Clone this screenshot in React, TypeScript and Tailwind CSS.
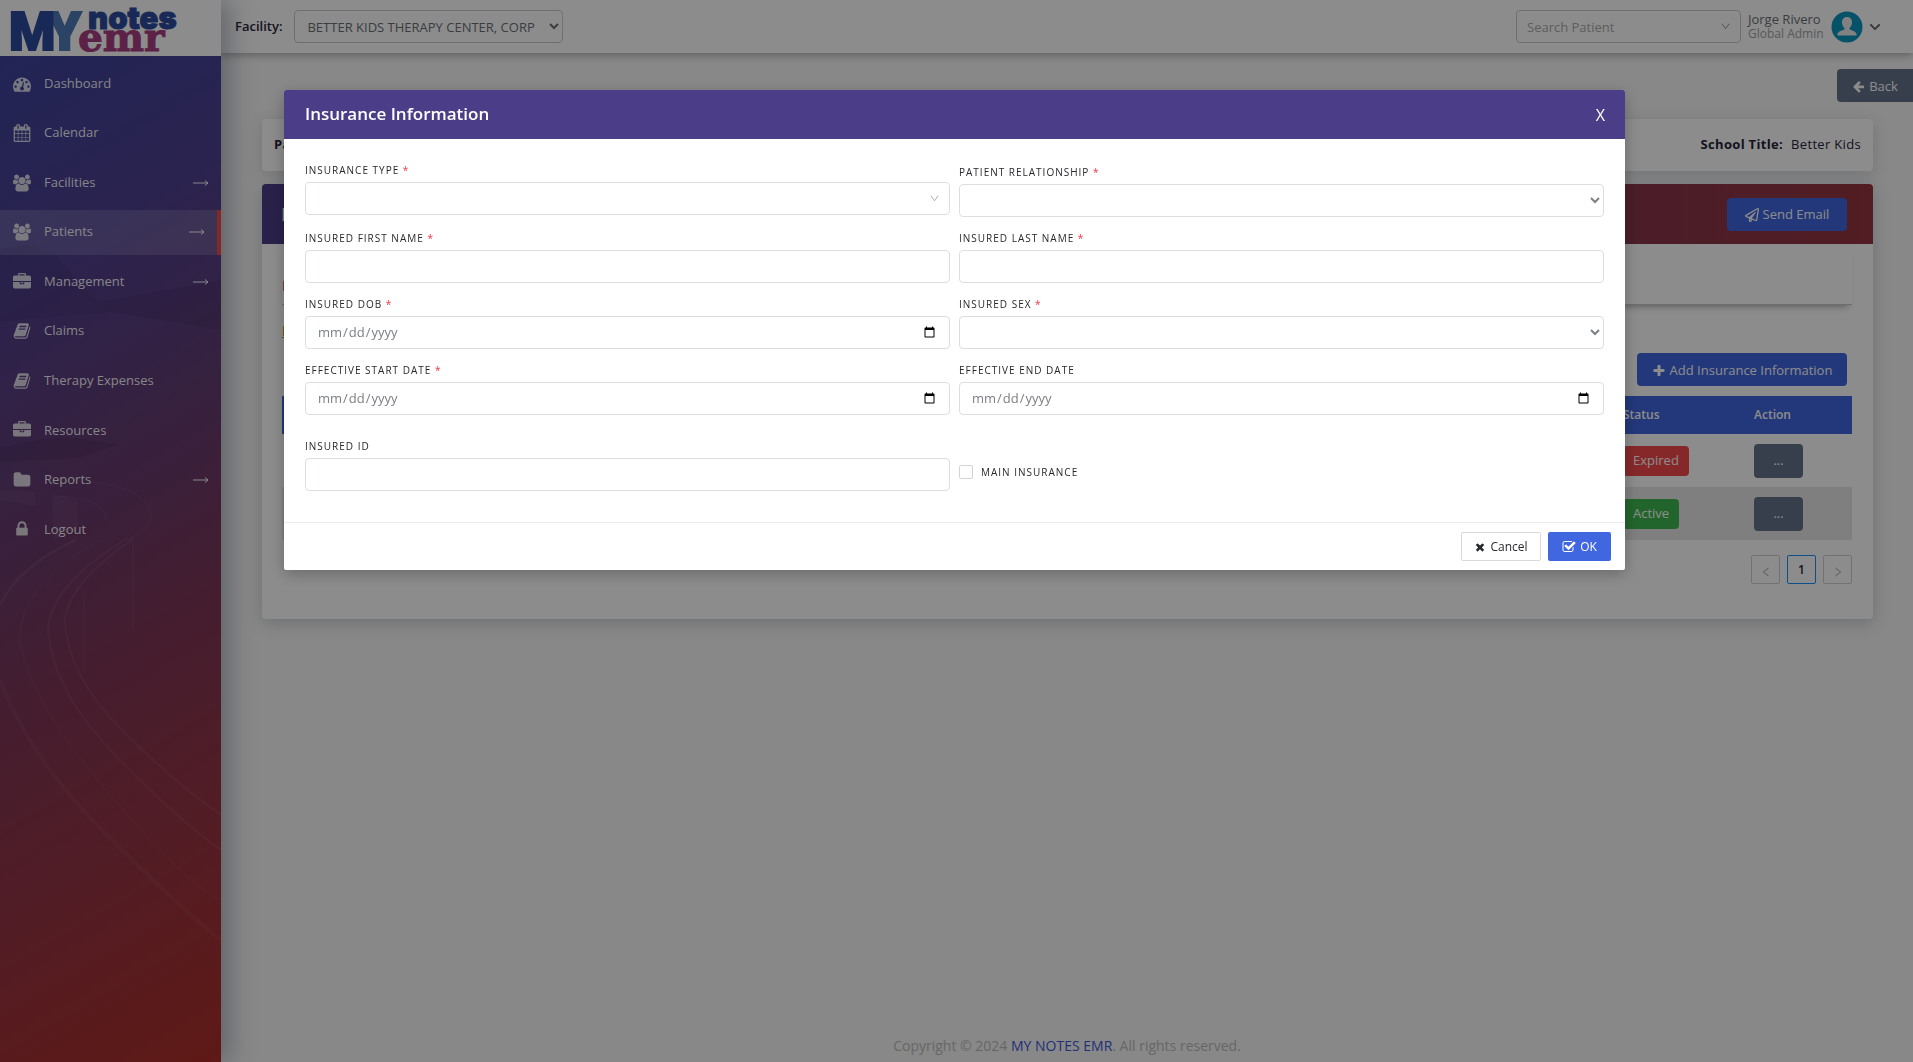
import { ReactNode } from 'react';
import { AiOutlineDown, AiOutlineLeft, AiOutlineRight } from 'react-icons/ai';
import { FaRegPaperPlane, FaChevronDown } from 'react-icons/fa';

const paths = {
  dashboard:
    'M384 1152q0-53-37.5-90.5t-90.5-37.5-90.5 37.5-37.5 90.5 37.5 90.5 90.5 37.5 90.5-37.5 37.5-90.5zm192-448q0-53-37.5-90.5t-90.5-37.5-90.5 37.5-37.5 90.5 37.5 90.5 90.5 37.5 90.5-37.5 37.5-90.5zm428 481l101-382q6-26-7.5-48.5t-38.5-29.5-48 6.5-30 39.5l-101 382q-60 5-107 43.5t-63 98.5q-20 77 20 146t117 89 146-20 89-117q16-60-6-117t-72-91zm660-33q0-53-37.5-90.5t-90.5-37.5-90.5 37.5-37.5 90.5 37.5 90.5 90.5 37.5 90.5-37.5 37.5-90.5zm-640-640q0-53-37.5-90.5t-90.5-37.5-90.5 37.5-37.5 90.5 37.5 90.5 90.5 37.5 90.5-37.5 37.5-90.5zm448 192q0-53-37.5-90.5t-90.5-37.5-90.5 37.5-37.5 90.5 37.5 90.5 90.5 37.5 90.5-37.5 37.5-90.5zm320 448q0 261-141 483-19 29-54 29h-1402q-35 0-54-29-141-221-141-483 0-182 71-348t191-286 286-191 348-71 348 71 286 191 191 286 71 348z',
  calendar:
    'M192 1664h288v-288h-288v288zm352 0h320v-288h-320v288zm-352-352h288v-320h-288v320zm352 0h320v-320h-320v320zm-352-384h288v-288h-288v288zm736 736h320v-288h-320v288zm-384-736h320v-288h-320v288zm768 736h288v-288h-288v288zm-384-352h320v-320h-320v320zm-352-864v-288q0-13-9.5-22.5t-22.5-9.5h-64q-13 0-22.5 9.5t-9.5 22.5v288q0 13 9.5 22.5t22.5 9.5h64q13 0 22.5-9.5t9.5-22.5zm736 864h288v-320h-288v320zm-384-384h320v-288h-320v288zm384 0h288v-288h-288v288zm32-480v-288q0-13-9.5-22.5t-22.5-9.5h-64q-13 0-22.5 9.5t-9.5 22.5v288q0 13 9.5 22.5t22.5 9.5h64q13 0 22.5-9.5t9.5-22.5zm384-64v1280q0 52-38 90t-90 38h-1408q-52 0-90-38t-38-90v-1280q0-52 38-90t90-38h128v-96q0-66 47-113t113-47h64q66 0 113 47t47 113v96h384v-96q0-66 47-113t113-47h64q66 0 113 47t47 113v96h128q52 0 90 38t38 90z',
  users:
    'M529 896q-162 5-265 128h-134q-82 0-138-40.5t-56-118.5q0-353 124-353 6 0 43.5 21t97.5 42.5 119 21.5q67 0 133-23-5 37-5 66 0 139 81 256zm1071 637q0 120-73 189.5t-194 69.5h-874q-121 0-194-69.5t-73-189.5q0-53 3.5-103.5t14-109 26.5-108.5 43-97.5 62-81 85.5-53.5 111.5-20q10 0 43 21.5t73 48 107 48 135 21.5 135-21.5 107-48 73-48 43-21.5q61 0 111.5 20t85.5 53.5 62 81 43 97.5 26.5 108.5 14 109 3.5 103.5zm-1024-1277q0 106-75 181t-181 75-181-75-75-181 75-181 181-75 181 75 75 181zm704 384q0 159-112.5 271.5t-271.5 112.5-271.5-112.5-112.5-271.5 112.5-271.5 271.5-112.5 271.5 112.5 112.5 271.5zm576 225q0 78-56 118.5t-138 40.5h-134q-103-123-265-128 81-117 81-256 0-29-5-66 66 23 133 23 59 0 119-21.5t97.5-42.5 43.5-21q124 0 124 353zm-128-609q0 106-75 181t-181 75-181-75-75-181 75-181 181-75 181 75 75 181z',
  briefcase:
    'M640 256h512v-128h-512v128zm1152 640v480q0 66-47 113t-113 47h-1472q-66 0-113-47t-47-113v-480h672v160q0 26 19 45t45 19h320q26 0 45-19t19-45v-160h672zm-768 0v128h-256v-128h256zm768-480v384h-1792v-384q0-66 47-113t113-47h352v-160q0-40 28-68t68-28h576q40 0 68 28t28 68v160h352q66 0 113 47t47 113z',
  book:
    'M1703 478q40 57 18 129l-275 906q-19 64-76.5 107.5t-122.5 43.5h-923q-77 0-148.5-53.5t-99.5-131.5q-24-67-2-127 0-4 3-27t4-37q1-8-3-21.5t-3-19.5q2-11 8-21t16.5-23.5 16.5-23.5q23-38 45-91.5t30-91.5q3-10 .5-30t-.5-28q3-11 17-28t17-23q21-36 42-92t25-90q1-9-2.5-32t.5-28q4-13 22-30.5t22-22.5q19-26 42.5-84.5t27.5-96.5q1-8-3-25.5t-2-26.5q2-8 9-18t18-23 17-21q8-12 16.5-30.5t15-35 16-36 19.5-32 26.5-23.5 36-11.5 47.5 5.5l-1 3q38-9 51-9h761q74 0 114 56t18 130l-274 906q-36 119-71.5 153.5t-128.5 34.5h-869q-27 0-38 15-11 16-1 43 24 70 144 70h923q29 0 56-15.5t35-41.5l300-987q7-22 5-57 38 15 59 43zm-1064 2q-4 13 2 22.5t20 9.5h608q13 0 25.5-9.5t16.5-22.5l21-64q4-13-2-22.5t-20-9.5h-608q-13 0-25.5 9.5t-16.5 22.5zm-83 256q-4 13 2 22.5t20 9.5h608q13 0 25.5-9.5t16.5-22.5l21-64q4-13-2-22.5t-20-9.5h-608q-13 0-25.5 9.5t-16.5 22.5z',
  folder:
    'M1728 608v704q0 92-66 158t-158 66h-1216q-92 0-158-66t-66-158v-960q0-92 66-158t158-66h320q92 0 158 66t66 158v32h672q92 0 158 66t66 158z',
  lock:
    'M640 768h512v-192q0-106-75-181t-181-75-181 75-75 181v192zm832 96v576q0 40-28 68t-68 28h-960q-40 0-68-28t-28-68v-576q0-40 28-68t68-28h32v-192q0-184 132-316t316-132 316 132 132 316v192h32q40 0 68 28t28 68z',
  arrowLeft:
    'M1664 896v128q0 53-32.5 90.5t-84.5 37.5h-704l293 294q38 36 38 90t-38 90l-75 76q-37 37-90 37-52 0-91-37l-651-652q-37-37-37-90 0-52 37-91l651-650q38-38 91-38 52 0 90 38l75 74q38 38 38 91t-38 91l-293 293h704q52 0 84.5 37.5t32.5 90.5z',
  plus:
    'M1600 736v192q0 40-28 68t-68 28h-416v416q0 40-28 68t-68 28h-192q-40 0-68-28t-28-68v-416h-416q-40 0-68-28t-28-68v-192q0-40 28-68t68-28h416v-416q0-40 28-68t68-28h192q40 0 68 28t28 68v416h416q40 0 68 28t28 68z',
  times:
    'M1490 1322q0 40-28 68l-136 136q-28 28-68 28t-68-28l-294-294-294 294q-28 28-68 28t-68-28l-136-136q-28-28-28-68t28-68l294-294-294-294q-28-28-28-68t28-68l136-136q28-28 68-28t68 28l294 294 294-294q28-28 68-28t68 28l136 136q28 28 28 68t-28 68l-294 294 294 294q28 28 28 68z',
  checkSquare:
    'M1472 930v318q0 119-84.5 203.5t-203.5 84.5h-832q-119 0-203.5-84.5t-84.5-203.5v-832q0-119 84.5-203.5t203.5-84.5h832q63 0 117 25 15 7 18 23 3 17-9 29l-49 49q-10 10-23 10-3 0-9-2-23-6-45-6h-832q-66 0-113 47t-47 113v832q0 66 47 113t113 47h832q66 0 113-47t47-113v-254q0-13 9-22l64-64q10-10 23-10 6 0 12 3 20 8 20 29zm231-489l-814 814q-24 24-57 24t-57-24l-430-430q-24-24-24-57t24-57l110-110q24-24 57-24t57 24l263 263 647-647q24-24 57-24t57 24l110 110q24 24 24 57t-24 57z',
};

type IconName = keyof typeof paths;

function Icon({ name, className }: { name: IconName; className?: string }) {
  const viewBox = name === 'users' ? '-64 0 1920 1792' : '0 0 1792 1792';
  return (
    <svg viewBox={viewBox} fill="currentColor" aria-hidden="true" className={className}>
      <path d={paths[name]} />
    </svg>
  );
}

const navItems: { label: string; icon: IconName; sub?: boolean; active?: boolean }[] = [
  { label: 'Dashboard', icon: 'dashboard' },
  { label: 'Calendar', icon: 'calendar' },
  { label: 'Facilities', icon: 'users', sub: true },
  { label: 'Patients', icon: 'users', sub: true, active: true },
  { label: 'Management', icon: 'briefcase', sub: true },
  { label: 'Claims', icon: 'book' },
  { label: 'Therapy Expenses', icon: 'book' },
  { label: 'Resources', icon: 'briefcase' },
  { label: 'Reports', icon: 'folder', sub: true },
  { label: 'Logout', icon: 'lock' },
];

function Logo() {
  return (
    <svg width="221" height="56" viewBox="0 0 221 56" className="overflow-visible" role="img" aria-label="My Notes EMR">
      <g fontFamily="Roboto, sans-serif" fontWeight="900" fontSize="53" strokeWidth="2">
        <text x="48" y="50" fill="#4f7cba" stroke="#4f7cba">Y</text>
        <text x="9" y="50" fill="#2e4c9e" stroke="#2e4c9e">M</text>
      </g>
      <text x="88" y="29" fontSize="31" fontWeight="900" fontFamily="Inter, sans-serif" fill="#2e4c9e" stroke="#2e4c9e">notes</text>
      <text x="78" y="51" fontSize="39" fontWeight="700" fontFamily="DejaVu Serif, serif" fill="#a83c80" stroke="#a83c80" strokeWidth="1">emr</text>
    </svg>
  );
}

function SidebarArt() {
  return (
    <svg
      className="absolute inset-0 w-full h-full"
      viewBox="0 0 221 1062"
      preserveAspectRatio="none"
      fill="none"
      stroke="#ffffff"
      strokeOpacity="0.06"
      aria-hidden="true"
    >
      <path d="M0 250Q40 235 62 262T98 302L221 280V330L110 312L0 322Z" fill="#000000" fillOpacity="0.06" stroke="none" />
      <path d="M0 448L60 436L118 444L80 458L0 462Z" fill="#000000" fillOpacity="0.08" stroke="none" />
      <path d="M76 540Q20 565 0 605" strokeWidth="3" />
      <path d="M100 540Q18 585 20 640Q28 700 110 795T221 900" />
      <path d="M128 538Q50 585 48 630Q52 690 115 755T221 850" strokeWidth="2" />
      <path d="M134 538Q66 585 65 622Q68 675 120 728T221 815" strokeWidth="2" />
      <path d="M0 680Q28 755 100 828T221 940" strokeWidth="4" strokeOpacity="0.04" />
      <path d="M84 590V672M133 540V628" />
      <path d="M90 482Q140 486 152 512Q152 528 128 540M60 496Q108 500 106 520" />
      <path d="M0 490L35 492V506L0 500ZM53 494L78 500V528L53 540Z" fill="#ffffff" fillOpacity="0.04" stroke="none" />
    </svg>
  );
}

function Sidebar() {
  return (
    <aside className="relative z-10 w-[221px] shrink-0 flex flex-col shadow-[8px_0_24px_rgba(40,55,80,0.35)] bg-[linear-gradient(150deg,#38459f_0%,#4f4090_24%,#663b6f_45%,#7d3657_60%,#953444_78%,#ad2f28_100%)]">
      <SidebarArt />
      <div className="relative h-14 bg-white">
        <Logo />
      </div>
      <nav className="relative mt-[5px] h-[491px] flex flex-col justify-between">
        {navItems.map((item) => (
          <a
            key={item.label}
            href="#"
            className={
              item.active
                ? 'h-[45px] flex items-center px-3 text-[13px] text-white/95 bg-white/15 border-r-4 border-[#f04848]'
                : 'h-[45px] flex items-center px-3 text-[13px] text-white/95'
            }
          >
            <span className="w-5 flex justify-center text-white/80">
              <Icon name={item.icon} className="w-[18px] h-[18px]" />
            </span>
            <span className="ml-3 flex-1">{item.label}</span>
            {item.sub && (
              <svg width="16" height="8" viewBox="0 0 16 8" fill="none" stroke="currentColor" aria-hidden="true">
                <path d="M0 4H15M12 1.500L15 4L12 6.500" />
              </svg>
            )}
          </a>
        ))}
      </nav>
    </aside>
  );
}

function Header() {
  return (
    <header className="h-[53px] shrink-0 bg-white flex items-center pl-[14px] pr-8 shadow-[0_2px_8px_rgba(0,0,0,0.3)]">
      <label htmlFor="facility" className="text-[13px] font-semibold text-[#27243a]">
        Facility:
      </label>
      <select id="facility" className="ml-3 w-[269px] h-[33px] px-2 rounded border border-[#c8cbd0] bg-white text-[13px] text-[#6b6f76]">
        <option>BETTER KIDS THERAPY CENTER, CORP</option>
      </select>
      <div className="ml-auto relative w-[225px]">
        <input
          type="text"
          aria-label="Search Patient"
          placeholder="Search Patient"
          className="w-full h-[33px] px-[10px] rounded border border-[#c8cbd0] bg-white text-[13px] placeholder:text-[#acacac]"
        />
        <AiOutlineDown className="absolute right-[10px] top-[11px] w-[11px] h-[11px] text-[#a0a0a0]" />
      </div>
      <div className="ml-[7px] w-[74px] whitespace-nowrap">
        <p className="text-[13px] leading-[15px] text-[#6b6f76]">Jorge Rivero</p>
        <p className="text-xs leading-[14px] text-[#a3a3a3]">Global Admin</p>
      </div>
      <svg className="ml-[9px]" width="32" height="32" viewBox="0 0 32 32" aria-hidden="true">
        <circle cx="16" cy="16" r="15.500" fill="#0b95c0" />
        <path d="M16 6c-3.500 0-5.300 2.500-5 6 .2 2.200 1.200 3.800 2.400 5v1.500c-2.400 1-6.500 1.700-7 4.900 0 .9.500 1.200 1.200 1.200h16.800c.7 0 1.200-.3 1.200-1.200-.5-3.200-4.600-3.900-7-4.900V17c1.200-1.200 2.200-2.800 2.400-5 .3-3.500-1.500-6-5-6z" fill="#ececec" />
      </svg>
      <FaChevronDown className="ml-[6px] w-3 h-3 text-[#666a70]" />
    </header>
  );
}

const rows = [
  { status: 'Expired', badge: 'bg-[#f44a4e]' },
  { status: 'Active', badge: 'bg-[#3fb950]' },
];

function PatientPage() {
  return (
    <main className="flex-1 flex flex-col pt-4">
      <button className="self-end h-[33px] w-[76px] pt-0.5 flex items-center justify-center gap-1 rounded-l bg-[#64748b] text-[13px] text-white">
        <Icon name="arrowLeft" className="w-[13px] h-[13px]" />
        Back
      </button>
      <div className="pl-[41px] pr-10 mt-[17px]">
        <section className="h-[52px] px-3 flex items-center justify-between bg-white rounded shadow-[0_4px_16px_rgba(60,75,100,0.2)] text-[13px] tracking-wide text-[#27243a]">
          <span className="font-bold">Patient:</span>
          <span>
            <span className="font-bold mr-2">School Title:</span>Better Kids
          </span>
        </section>

        <section className="mt-[13px] rounded bg-white shadow-[0_4px_16px_rgba(60,75,100,0.25)]">
          <div className="h-[60px] pl-[19px] pr-[26px] flex items-center justify-between rounded-t bg-[linear-gradient(90deg,#4b3d87_0%,#6d3a66_50%,#953540_100%)]">
            <h1 className="text-lg text-white">Insurance</h1>
            <button className="h-[33px] w-[120px] pt-0.5 flex items-center justify-center gap-1 rounded bg-[#4066e0] text-[13px] text-white">
              <FaRegPaperPlane className="w-[14px] h-[14px]" />
              Send Email
            </button>
          </div>
          <div className="pl-5 pr-[21px] pb-[35px]">
            <div className="h-[61px] pt-8 text-sm font-semibold text-[#a03070] border-b border-[#c8c8c8] shadow-[0_6px_6px_-4px_rgba(0,0,0,0.3)]">
              Insurance
            </div>
            <a href="#" className="block mt-4 text-sm underline font-semibold text-[#d08020]">Insurance</a>
            <div className="mt-3 pr-[5px] flex justify-end">
              <button className="h-[33px] w-[210px] pt-0.5 flex items-center justify-center gap-1 rounded bg-[#4066e0] text-[13px] text-white">
                <Icon name="plus" className="w-[14px] h-[14px]" />
                Add Insurance Information
              </button>
            </div>
            <table className="mt-[10px] w-full table-fixed text-[13px] text-left">
              <colgroup>
                <col />
                <col className="w-[131px]" />
                <col className="w-[108px]" />
              </colgroup>
              <thead>
                <tr className="h-[38px] bg-[#4066e0] text-white text-xs">
                  <th />
                  <th className="px-[10px] font-semibold">Status</th>
                  <th className="px-[10px] font-semibold">Action</th>
                </tr>
              </thead>
              <tbody>
                {rows.map((row) => (
                  <tr key={row.status} className="h-[53px] even:bg-[#e8e8e8]">
                    <td />
                    <td className="px-[10px]">
                      <span className={`${row.badge} inline-flex items-center h-[30px] px-[10px] rounded text-white`}>
                        {row.status}
                      </span>
                    </td>
                    <td className="px-[10px]">
                      <button aria-label="Row actions" className="block w-[49px] h-[34px] rounded bg-[#64748b] text-white">
                        ...
                      </button>
                    </td>
                  </tr>
                ))}
              </tbody>
            </table>
            <div className="mt-[15px] flex justify-end gap-[7px]">
              <button aria-label="Previous page" className="w-[29px] h-[29px] pt-1 flex items-center justify-center rounded-[2px] border border-[#d0d0d0] text-[#b0b0b0]">
                <AiOutlineLeft className="w-3 h-3" />
              </button>
              <button className="w-[29px] h-[29px] rounded-[2px] border border-[#1890ff] text-xs font-semibold text-[#27243a]">
                1
              </button>
              <button aria-label="Next page" className="w-[29px] h-[29px] pt-1 flex items-center justify-center rounded-[2px] border border-[#d0d0d0] text-[#b0b0b0]">
                <AiOutlineRight className="w-3 h-3" />
              </button>
            </div>
          </div>
        </section>
      </div>
      <footer className="mt-auto pb-[6px] text-center text-sm leading-5 text-[#bcbcbc]">
        Copyright © 2024 <a href="#" className="text-[#4058d8]">MY NOTES EMR</a>. All rights reserved.
      </footer>
    </main>
  );
}

const control = 'block w-full h-[33px] rounded border border-[#dcdee0] bg-white px-[11px] text-[13px] text-[#7c8086]';

function Field({ id, label, required, className = '', children }: {
  id: string;
  label: string;
  required?: boolean;
  className?: string;
  children: ReactNode;
}) {
  return (
    <div className={className}>
      <label htmlFor={id} className="block h-[22px] text-[10px] leading-5 tracking-[1px] uppercase text-[#27282c]">
        {label} {required && <span className="text-[#f5333f]">*</span>}
      </label>
      {children}
    </div>
  );
}

function InsuranceModal() {
  return (
    <div className="fixed inset-0 z-20 pt-[90px] pr-1 bg-black/45">
      <div role="dialog" aria-labelledby="modal-title" className="w-[70.25%] mx-auto rounded-[2px] overflow-hidden bg-white shadow-[0_4px_16px_rgba(0,0,0,0.25)]">
        <div className="h-[49px] pl-[21px] pr-5 flex items-center justify-between bg-[#4b3d87] text-white">
          <h2 id="modal-title" className="pb-0.5 text-[17px] font-semibold">Insurance Information</h2>
          <button aria-label="Close" className="text-base">X</button>
        </div>

        <form className="px-[21px] pt-[21px] pb-[31px] grid grid-cols-2 gap-x-[9px] gap-y-[11px]">
          <Field id="type" label="Insurance Type" required>
            <div className="relative">
              <select id="type" className={`${control} appearance-none`} />
              <AiOutlineDown className="absolute right-[10px] top-[11px] w-[11px] h-[11px] text-[#b5b5b5]" />
            </div>
          </Field>
          <Field id="relationship" label="Patient Relationship" required className="pt-[2px]">
            <select id="relationship" className={control} />
          </Field>
          <Field id="first" label="Insured First Name" required>
            <input id="first" type="text" className={control} />
          </Field>
          <Field id="last" label="Insured Last Name" required>
            <input id="last" type="text" className={control} />
          </Field>
          <Field id="dob" label="Insured DOB" required>
            <input id="dob" type="date" className={control} />
          </Field>
          <Field id="sex" label="Insured Sex" required>
            <select id="sex" className={control} />
          </Field>
          <Field id="start" label="Effective Start Date" required>
            <input id="start" type="date" className={control} />
          </Field>
          <Field id="end" label="Effective End Date">
            <input id="end" type="date" className={control} />
          </Field>
          <Field id="insured-id" label="Insured ID" className="pt-[10px]">
            <input id="insured-id" type="text" className={control} />
          </Field>
          <div className="pt-[39px]">
            <label className="flex items-center gap-2 h-[14px] text-[10px] tracking-[1px] uppercase text-[#27282c]">
              <input type="checkbox" className="appearance-none w-[14px] h-[14px] rounded-[2px] border border-[#d4d4d4] bg-white" />
              Main Insurance
            </label>
          </div>
        </form>

        <div className="flex justify-end gap-[7px] pt-[9px] pb-[9px] pr-[14px] border-t border-[#ececec] text-xs">
          <button className="h-[29px] w-20 flex items-center justify-center gap-1 rounded-[2px] border border-[#d9d9d9] text-[#27282c]">
            <Icon name="times" className="w-3 h-3" />
            Cancel
          </button>
          <button className="h-[29px] w-[63px] flex items-center justify-center gap-1 rounded-[2px] bg-[#4066e0] text-white">
            <Icon name="checkSquare" className="w-[14px] h-[14px]" />
            OK
          </button>
        </div>
      </div>
    </div>
  );
}

export default function App() {
  return (
    <div className="min-h-screen flex bg-[#f7f7f7] font-['Open_Sans','Noto_Sans',sans-serif]">
      <Sidebar />
      <div className="flex-1 flex flex-col">
        <Header />
        <PatientPage />
      </div>
      <InsuranceModal />
    </div>
  );
}
